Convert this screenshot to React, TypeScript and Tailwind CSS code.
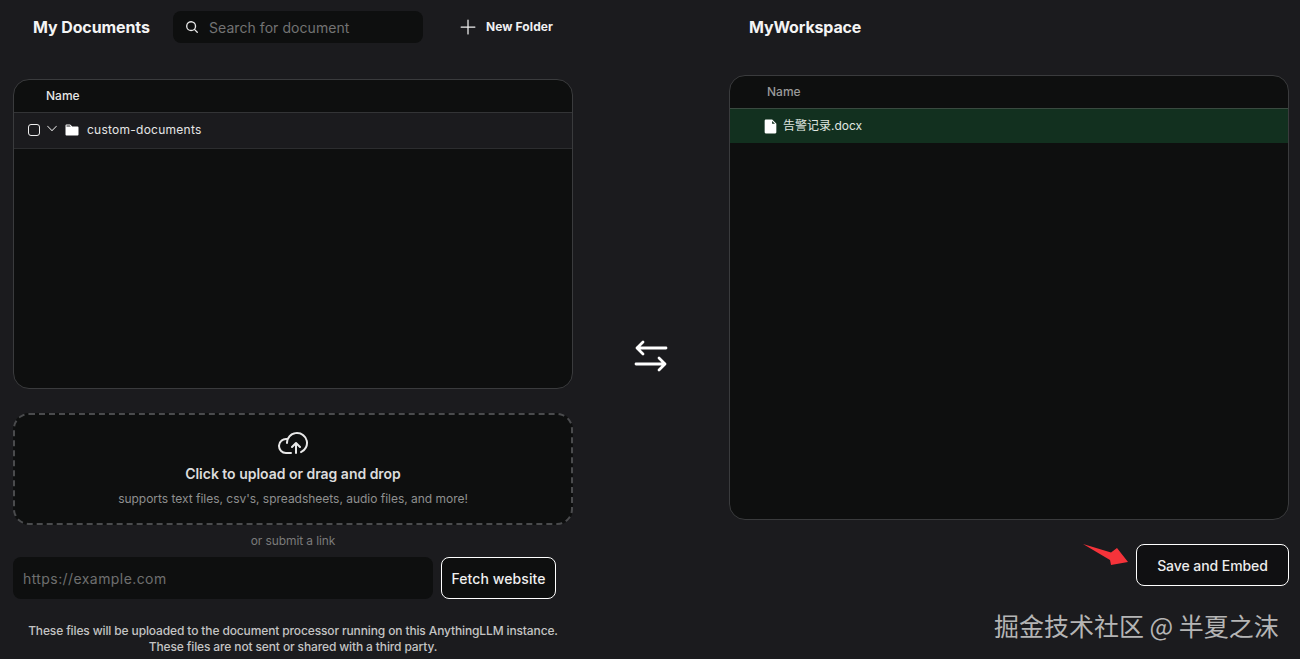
import {
  PiCaretDown,
  PiCloudArrowUp,
  PiFileFill,
  PiFolderFill,
  PiMagnifyingGlassBold,
  PiPlus,
} from "react-icons/pi";

function SwapArrows() {
  return (
    <svg width="34" height="34" viewBox="0 0 34 34" fill="none">
      <path
        d="M32 9H3M9 3 3 9l6 6M2 25h29M25 19l6 6-6 6"
        stroke="#fff"
        strokeWidth="2.8"
        strokeLinecap="round"
        strokeLinejoin="round"
      />
    </svg>
  );
}

function RedArrow() {
  return (
    <svg
      className="absolute left-[1082px] top-[543px]"
      width="48"
      height="24"
      viewBox="0 0 48 24"
    >
      <path d="M1 1 29 9.5 35 5 46 19 29 22 28 17Z" fill="#f5333a" />
    </svg>
  );
}

export default function App() {
  return (
    <div className="relative flex w-[1300px] h-[659px] overflow-hidden bg-[#1b1b1e] font-['Inter','Noto_Sans_CJK_SC',sans-serif] text-white">
      {/* left column */}
      <div className="w-[560px] ml-[13px] flex flex-col">
        <div className="h-[54px] flex items-center">
          <h2 className="ml-[20px] w-[140px] text-[16px] font-bold tracking-[-0.1px] text-[#f4f4f4]">
            My Documents
          </h2>
          <div className="w-[250px] h-[32px] rounded-lg bg-[#0e0f0f] flex items-center pl-[12px] gap-[10px]">
            <PiMagnifyingGlassBold size={14} color="#e8e8e8" />
            <span className="text-[14px] tracking-[0.06px] text-[#737373]">
              Search for document
            </span>
          </div>
          <div className="ml-[35px] flex items-center gap-[8px]">
            <PiPlus size={20} color="#f0f0f0" />
            <span className="text-[12px] font-bold tracking-[0.1px] text-[#f0f0f0]">
              New Folder
            </span>
          </div>
        </div>

        <div className="mt-[25px] h-[310px] rounded-2xl border border-[#3a3b3d] bg-[#0e0f0f] overflow-hidden">
          <div className="h-[33px] flex items-center pl-[32px] text-[12px] font-medium text-[#e6e6e6] border-b border-[#333436]">
            Name
          </div>
          <div className="h-[36px] pb-[2px] flex items-center bg-[#1b1b1e] border-b border-[#2c2d2f]">
            <div className="ml-[14px] w-[12px] h-[12px] rounded-[3px] border border-[#eeeeee]" />
            <PiCaretDown size={14} color="#d8d8d8" className="ml-[5px] -mt-[3px]" />
            <PiFolderFill size={16} color="#fff" className="ml-[5px]" />
            <span className="ml-[7px] text-[12px] tracking-[0.25px] text-[#e6e6e6]">
              custom-documents
            </span>
          </div>
        </div>

        <div className="mt-[24px] h-[112px] rounded-2xl border-2 border-dashed border-[#4a4b4d] bg-[#0e0f0f] flex flex-col items-center">
          <PiCloudArrowUp size={32} color="#e8e8e8" className="mt-[12px]" />
          <div className="mt-[4px] text-[14px] font-semibold tracking-[-0.02px] text-[#dcdcdc]">
            Click to upload or drag and drop
          </div>
          <div className="mt-[6px] text-[12px] tracking-[-0.02px] text-[#8f8f8f]">
            supports text files, csv's, spreadsheets, audio files, and more!
          </div>
        </div>

        <div className="mt-[8px] text-center text-[12px] tracking-[-0.1px] text-[#7a7a7a] leading-[15px]">
          or submit a link
        </div>

        <div className="mt-[9px] flex gap-[8px]">
          <div className="w-[420px] h-[42px] rounded-lg bg-[#0e0f0f] flex items-center pl-[10px] text-[14px] tracking-[0.42px] text-[#6f6f6f]">
            https://example.com
          </div>
          <button className="w-[115px] h-[42px] rounded-lg border border-white bg-[#0e0f0f] text-[14px] font-medium tracking-[0.08px] text-[#f0f0f0]">
            Fetch website
          </button>
        </div>

        <p className="mt-[24px] text-center text-[12px] leading-[16px] font-medium tracking-[-0.13px] text-[#c4c4c4]">
          These files will be uploaded to the document processor running on this AnythingLLM instance.
          <br />
          These files are not sent or shared with a third party.
        </p>
      </div>

      {/* swap arrows */}
      <div className="w-[156px] flex justify-center pt-[339px]">
        <div>
          <SwapArrows />
        </div>
      </div>

      {/* right column */}
      <div className="w-[560px] flex flex-col">
        <div className="h-[54px] flex items-center pl-[20px]">
          <h2 className="text-[16px] font-bold tracking-[-0.14px] text-[#f4f4f4]">MyWorkspace</h2>
        </div>
        <div className="mt-[21px] h-[445px] rounded-2xl border border-[#3a3b3d] bg-[#0e0f0f] overflow-hidden">
          <div className="h-[33px] flex items-center pl-[37px] text-[12px] font-medium text-[#9a9a9a] border-b border-[#3a4a40]">
            Name
          </div>
          <div className="h-[34px] flex items-center pl-[32px] bg-[#12301f]">
            <PiFileFill size={17} color="#fff" />
            <span className="ml-[4px] text-[12px] text-[#e0e8e2]">告警记录.docx</span>
          </div>
        </div>
        <div className="mt-[24px] flex justify-end">
          <button className="w-[153px] h-[42px] rounded-lg border border-white bg-[#101012] text-[14px] font-medium tracking-[-0.07px] text-[#ececec]">
            Save and Embed
          </button>
        </div>
      </div>

      <RedArrow />
      <div className="absolute left-[994px] top-[607px] text-[25px] leading-[36px] whitespace-nowrap font-['Noto_Sans_CJK_SC',sans-serif] text-[#b5b5b5]">
        掘金技术社区 @ 半夏之沫
      </div>
    </div>
  );
}
